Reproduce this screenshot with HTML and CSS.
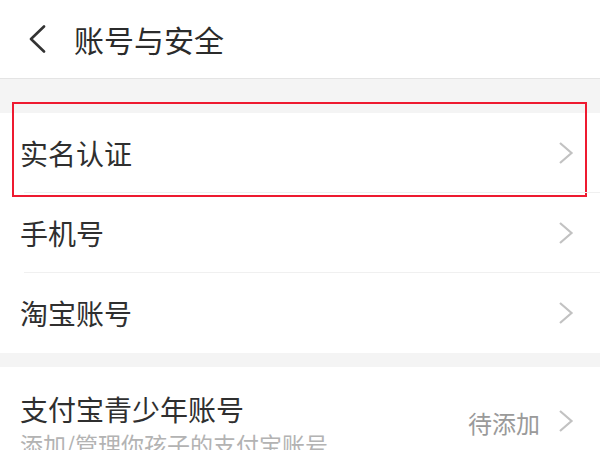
FILE: index.html
```html
<!DOCTYPE html>
<html lang="zh-CN">
<head>
<meta charset="utf-8">
<title>账号与安全</title>
<link rel="stylesheet" href="styles.css">
</head>
<body>
<div class="page">
  <header class="header">
    <svg class="back" width="20" height="28" viewBox="0 0 20 28"><path d="M17 1.5 L4 14 L17 26.5" fill="none" stroke="#333" stroke-width="2.6" stroke-linecap="round" stroke-linejoin="round"/></svg>
    <h1 class="title">账号与安全</h1>
  </header>
  <div class="gap gap-lg"></div>
  <section class="group">
    <div class="row highlighted">
      <span class="label">实名认证</span>
      <svg class="chev" width="16" height="22" viewBox="0 0 16 22"><path d="M2 1 L13.5 11 L2 21" fill="none" stroke="#c2c2c2" stroke-width="2.2" stroke-linejoin="miter"/></svg>
      <div class="mark"></div>
    </div>
    <div class="row">
      <span class="label">手机号</span>
      <svg class="chev" width="16" height="22" viewBox="0 0 16 22"><path d="M2 1 L13.5 11 L2 21" fill="none" stroke="#c2c2c2" stroke-width="2.2" stroke-linejoin="miter"/></svg>
    </div>
    <div class="row last">
      <span class="label">淘宝账号</span>
      <svg class="chev" width="16" height="22" viewBox="0 0 16 22"><path d="M2 1 L13.5 11 L2 21" fill="none" stroke="#c2c2c2" stroke-width="2.2" stroke-linejoin="miter"/></svg>
    </div>
  </section>
  <div class="gap gap-sm"></div>
  <section class="group">
    <div class="row row-tall">
      <div class="texts">
        <span class="label">支付宝青少年账号</span>
        <span class="sub">添加/管理你孩子的支付宝账号</span>
      </div>
      <span class="value">待添加</span>
      <svg class="chev" width="16" height="22" viewBox="0 0 16 22"><path d="M2 1 L13.5 11 L2 21" fill="none" stroke="#c2c2c2" stroke-width="2.2" stroke-linejoin="miter"/></svg>
    </div>
  </section>
</div>
</body>
</html>
```

FILE: styles.css
```css
* { box-sizing: border-box; margin: 0; padding: 0; }
html, body { width: 600px; height: 450px; overflow: hidden; background: #fff; }
body {
  font-family: "Noto Sans CJK SC", "Noto Sans", sans-serif;
  color: #333;
}
.page { width: 600px; }
.header {
  height: 79px;
  display: flex;
  align-items: center;
  padding-left: 27px;
  border-bottom: 1px solid #e4e4e4;
  background: #fff;
}
.back { margin-right: 27px; }
.title {
  font-size: 30px;
  font-weight: 400;
  color: #2b2b2b;
  line-height: 1;
}
.gap { background: #f4f4f4; }
.gap-lg { height: 34px; }
.gap-sm { height: 14px; }
.group { background: #fff; }
.row {
  position: relative;
  height: 80px;
  display: flex;
  align-items: center;
  padding-left: 20px;
  padding-right: 26px;
}
.row::after {
  content: "";
  position: absolute;
  left: 24px;
  right: 0;
  bottom: 0;
  height: 1px;
  background: #f0f0f0;
}
.row.last::after { display: none; }
.label {
  font-size: 28px;
  line-height: 1;
  color: #2f2f2f;
  flex: 1;
}
.chev { flex: none; }
.mark {
  position: absolute;
  left: 12px;
  top: -11px;
  width: 575px;
  height: 95px;
  border: 2.5px solid #ee1a30;
  pointer-events: none;
}
.row-tall {
  height: 90px;
  align-items: flex-start;
  padding-top: 28px;
}
.row-tall::after { display: none; }
.texts { flex: 1; display: flex; flex-direction: column; }
.texts .label { flex: none; }
.sub {
  margin-top: 10px;
  font-size: 23px;
  line-height: 1;
  color: #b3b3b3;
  white-space: nowrap;
}
.value {
  font-size: 24px;
  line-height: 1;
  color: #9a9a9a;
  margin-top: 16px;
  margin-right: 18px;
}
.row-tall .chev { margin-top: 15px; }
```
